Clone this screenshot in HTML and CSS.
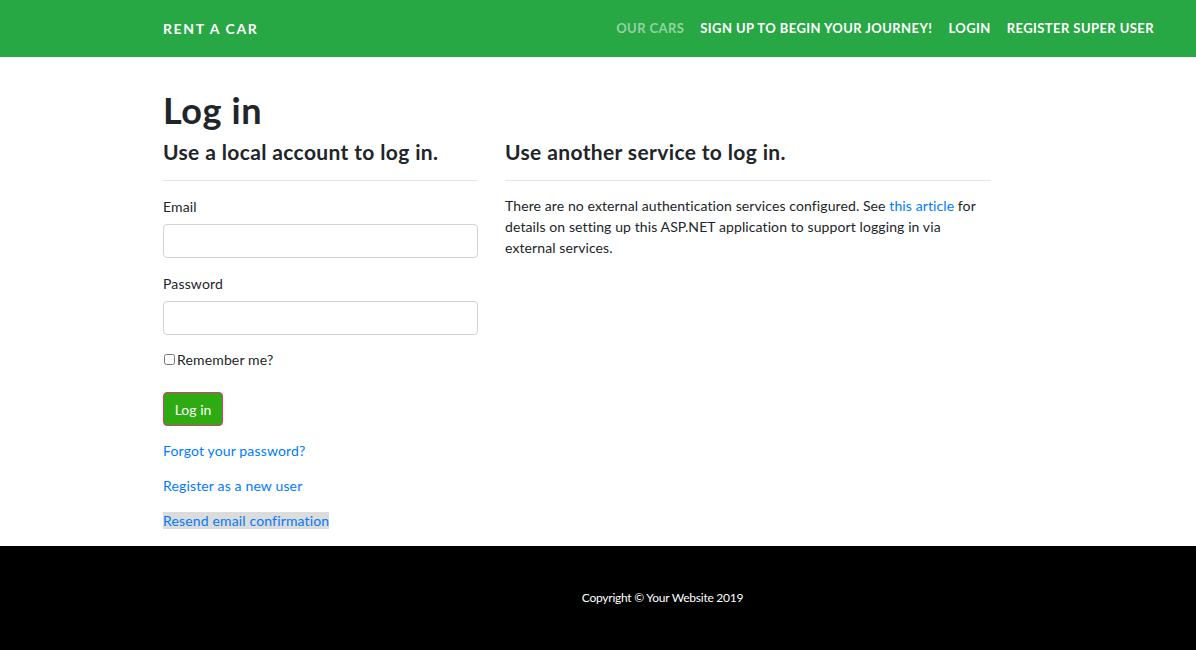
FILE: index.html
```html
<!DOCTYPE html>
<html lang="en">
<head>
<meta charset="utf-8">
<title>Log in - Rent A Car</title>
<link rel="stylesheet" href="styles.css">
</head>
<body>
<header class="navbar">
  <div class="nav-inner">
    <a class="brand" href="#">Rent a car</a>
    <nav class="nav-links">
      <a class="nav-link muted" href="#">Our cars</a>
      <a class="nav-link" href="#">Sign up to begin your journey!</a>
      <a class="nav-link" href="#">Login</a>
      <a class="nav-link" href="#">Register super user</a>
    </nav>
  </div>
</header>
<main class="main">
  <h1 class="title">Log in</h1>
  <div class="row">
    <section class="col-left">
      <h4 class="subtitle">Use a local account to log in.</h4>
      <hr class="rule">
      <form class="form">
        <div class="form-group">
          <label class="label" for="email">Email</label>
          <input class="input" id="email" type="email">
        </div>
        <div class="form-group">
          <label class="label" for="password">Password</label>
          <input class="input" id="password" type="password">
        </div>
        <div class="form-group check-group">
          <label class="check-label"><input class="checkbox" type="checkbox"> Remember me?</label>
        </div>
        <div class="form-group">
          <button class="btn" type="button">Log in</button>
        </div>
        <p class="link-p"><a class="link" href="#">Forgot your password?</a></p>
        <p class="link-p"><a class="link" href="#">Register as a new user</a></p>
        <p class="link-p"><a class="link highlight" href="#">Resend email confirmation</a></p>
      </form>
    </section>
    <section class="col-right">
      <h4 class="subtitle">Use another service to log in.</h4>
      <hr class="rule">
      <p class="text">There are no external authentication services configured. See <a class="link" href="#">this article</a> for details on setting up this ASP.NET application to support logging in via external services.</p>
    </section>
  </div>
</main>
<footer class="footer">
  <div class="footer-inner">Copyright &copy; Your Website 2019</div>
</footer>
</body>
</html>
```

FILE: styles.css
```css
* { box-sizing: border-box; }
html, body { margin: 0; padding: 0; }
body {
  font-family: Lato, "Open Sans", sans-serif;
  font-size: 14px;
  line-height: 21px;
  letter-spacing: 0.15px;
  color: #212529;
  background: #fff;
}
a { text-decoration: none; }

.navbar {
  background: #28a745;
  height: 57px;
}
.nav-inner {
  margin-left: 163px;
  width: 991px;
  height: 57px;
  display: flex;
  align-items: center;
  justify-content: space-between;
}
.brand {
  color: #fff;
  font-weight: 700;
  font-size: 14px;
  letter-spacing: 1.6px;
  text-transform: uppercase;
}
.nav-links {
  display: flex;
  gap: 16px;
}
.nav-link {
  color: #fff;
  font-weight: 700;
  font-size: 13px;
  letter-spacing: 0.42px;
  text-transform: uppercase;
}
.nav-link.muted { color: #93d3a2; }

.main {
  margin-left: 163px;
  padding-top: 32px;
}
.title {
  margin: 0 0 7px;
  font-size: 36px;
  line-height: 42px;
  font-weight: 700;
  letter-spacing: 0.6px;
}
.row {
  display: flex;
  gap: 27px;
}
.col-left { width: 315px; }
.col-right { width: 486px; }
.subtitle {
  margin: 0;
  padding-top: 1px;
  font-size: 21px;
  line-height: 25px;
  font-weight: 700;
  letter-spacing: 0.37px;
}
.rule {
  margin: 16px 0 14px;
  border: 0;
  border-top: 1px solid #e5e5e5;
  height: 0;
}
.form-group { margin-bottom: 14px; }
.label {
  display: block;
  padding-top: 1px;
  margin-bottom: 7px;
}
.input {
  display: block;
  width: 100%;
  height: 34px;
  border: 1px solid #ced4da;
  border-radius: 4px;
  font: inherit;
  padding: 5px 10px;
  background: #fff;
}
.check-group { margin-bottom: 22px; }
.check-label {
  display: flex;
  align-items: center;
  height: 21px;
}
.checkbox {
  width: 11px;
  height: 11px;
  margin: 0 2px 0 1px;
}
.btn {
  font: inherit;
  letter-spacing: 0;
  color: #fff;
  background: #2eab10;
  border: 1px solid #e0357d;
  border-radius: 4px;
  height: 34px;
  width: 60px;
  padding: 0;
}
.link-p { margin: 0 0 14px; }
.link { color: #007bff; }
.highlight { background: #dcdcdc; padding: 0; }
.text { margin: 0; letter-spacing: 0.1px; }

.footer {
  background: #000;
  height: 104px;
  margin-top: 1px;
  display: flex;
  align-items: center;
}
.footer-inner {
  margin-left: 163px;
  width: 999px;
  text-align: center;
  color: #fff;
  font-size: 12px;
  letter-spacing: -0.25px;
  padding-bottom: 2px;
}
```
